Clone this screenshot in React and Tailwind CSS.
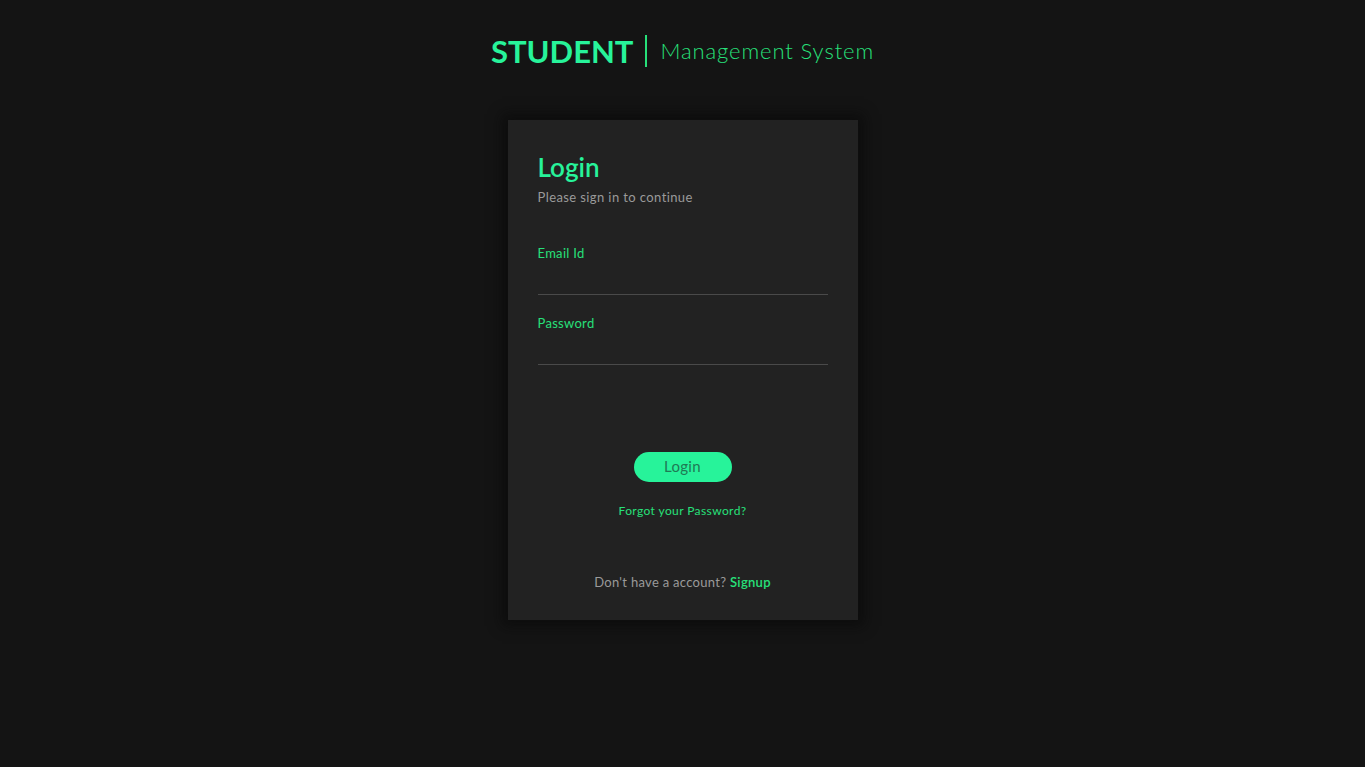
export default function App() {
  return (
    <div
      className="min-h-screen bg-[#141414] flex flex-col items-center"
      style={{ fontFamily: 'Lato, "Noto Sans", sans-serif' }}
    >
      {/* ── En-tête ─────────────────────────────────── */}
      <header className="mt-[31px] flex items-center h-[40px]">
        <h1 className="text-[31px] font-bold text-[#27f39a] leading-none">STUDENT</h1>
        <span className="ml-[12px] mr-[13px] h-[32px] w-[2px] bg-[#27e07a]" />
        <span className="text-[22px] font-light text-[#27e07a] leading-none tracking-[0.9px]">Management System</span>
      </header>

      {/* ── Carte de connexion ──────────────────────── */}
      <div className="mt-[49px] w-[350px] h-[500px] bg-[#222222] shadow-[0_0_12px_6px_rgba(8,8,8,0.6)] px-[30px] pt-[32px] flex flex-col">
        <h2 className="text-[26px] font-semibold text-[#27f39a] leading-[30px]">Login</h2>
        <p className="mt-[6px] text-[13px] text-[#9a9a9a] tracking-[0.4px]">Please sign in to continue</p>

        <label className="mt-[32px] block">
          <span className="text-[13px] text-[#27e07a] tracking-[0.3px]">Email Id</span>
          <input type="text" className="block w-full h-[31px] bg-transparent border-b border-[#4a4a4a] outline-none text-[#ddd]" />
        </label>

        <label className="mt-[15px] block">
          <span className="text-[13px] text-[#27e07a] tracking-[0.3px]">Password</span>
          <input type="password" className="block w-full h-[31px] bg-transparent border-b border-[#4a4a4a] outline-none text-[#ddd]" />
        </label>

        <div className="mt-[87px] flex flex-col items-center">
          <button className="w-[98px] h-[30px] rounded-full bg-[#27f39a] text-[15px] text-[#1f7a55] tracking-[0.3px]">Login</button>
          <a className="mt-[20px] text-[12px] text-[#27e07a] tracking-[0.4px]">Forgot your Password?</a>
          <p className="mt-[53px] text-[13px] text-[#9a9a9a] tracking-[0.3px]">
            Don't have a account? <span className="text-[#27e07a] font-semibold">Signup</span>
          </p>
        </div>
      </div>
    </div>
  )
}
